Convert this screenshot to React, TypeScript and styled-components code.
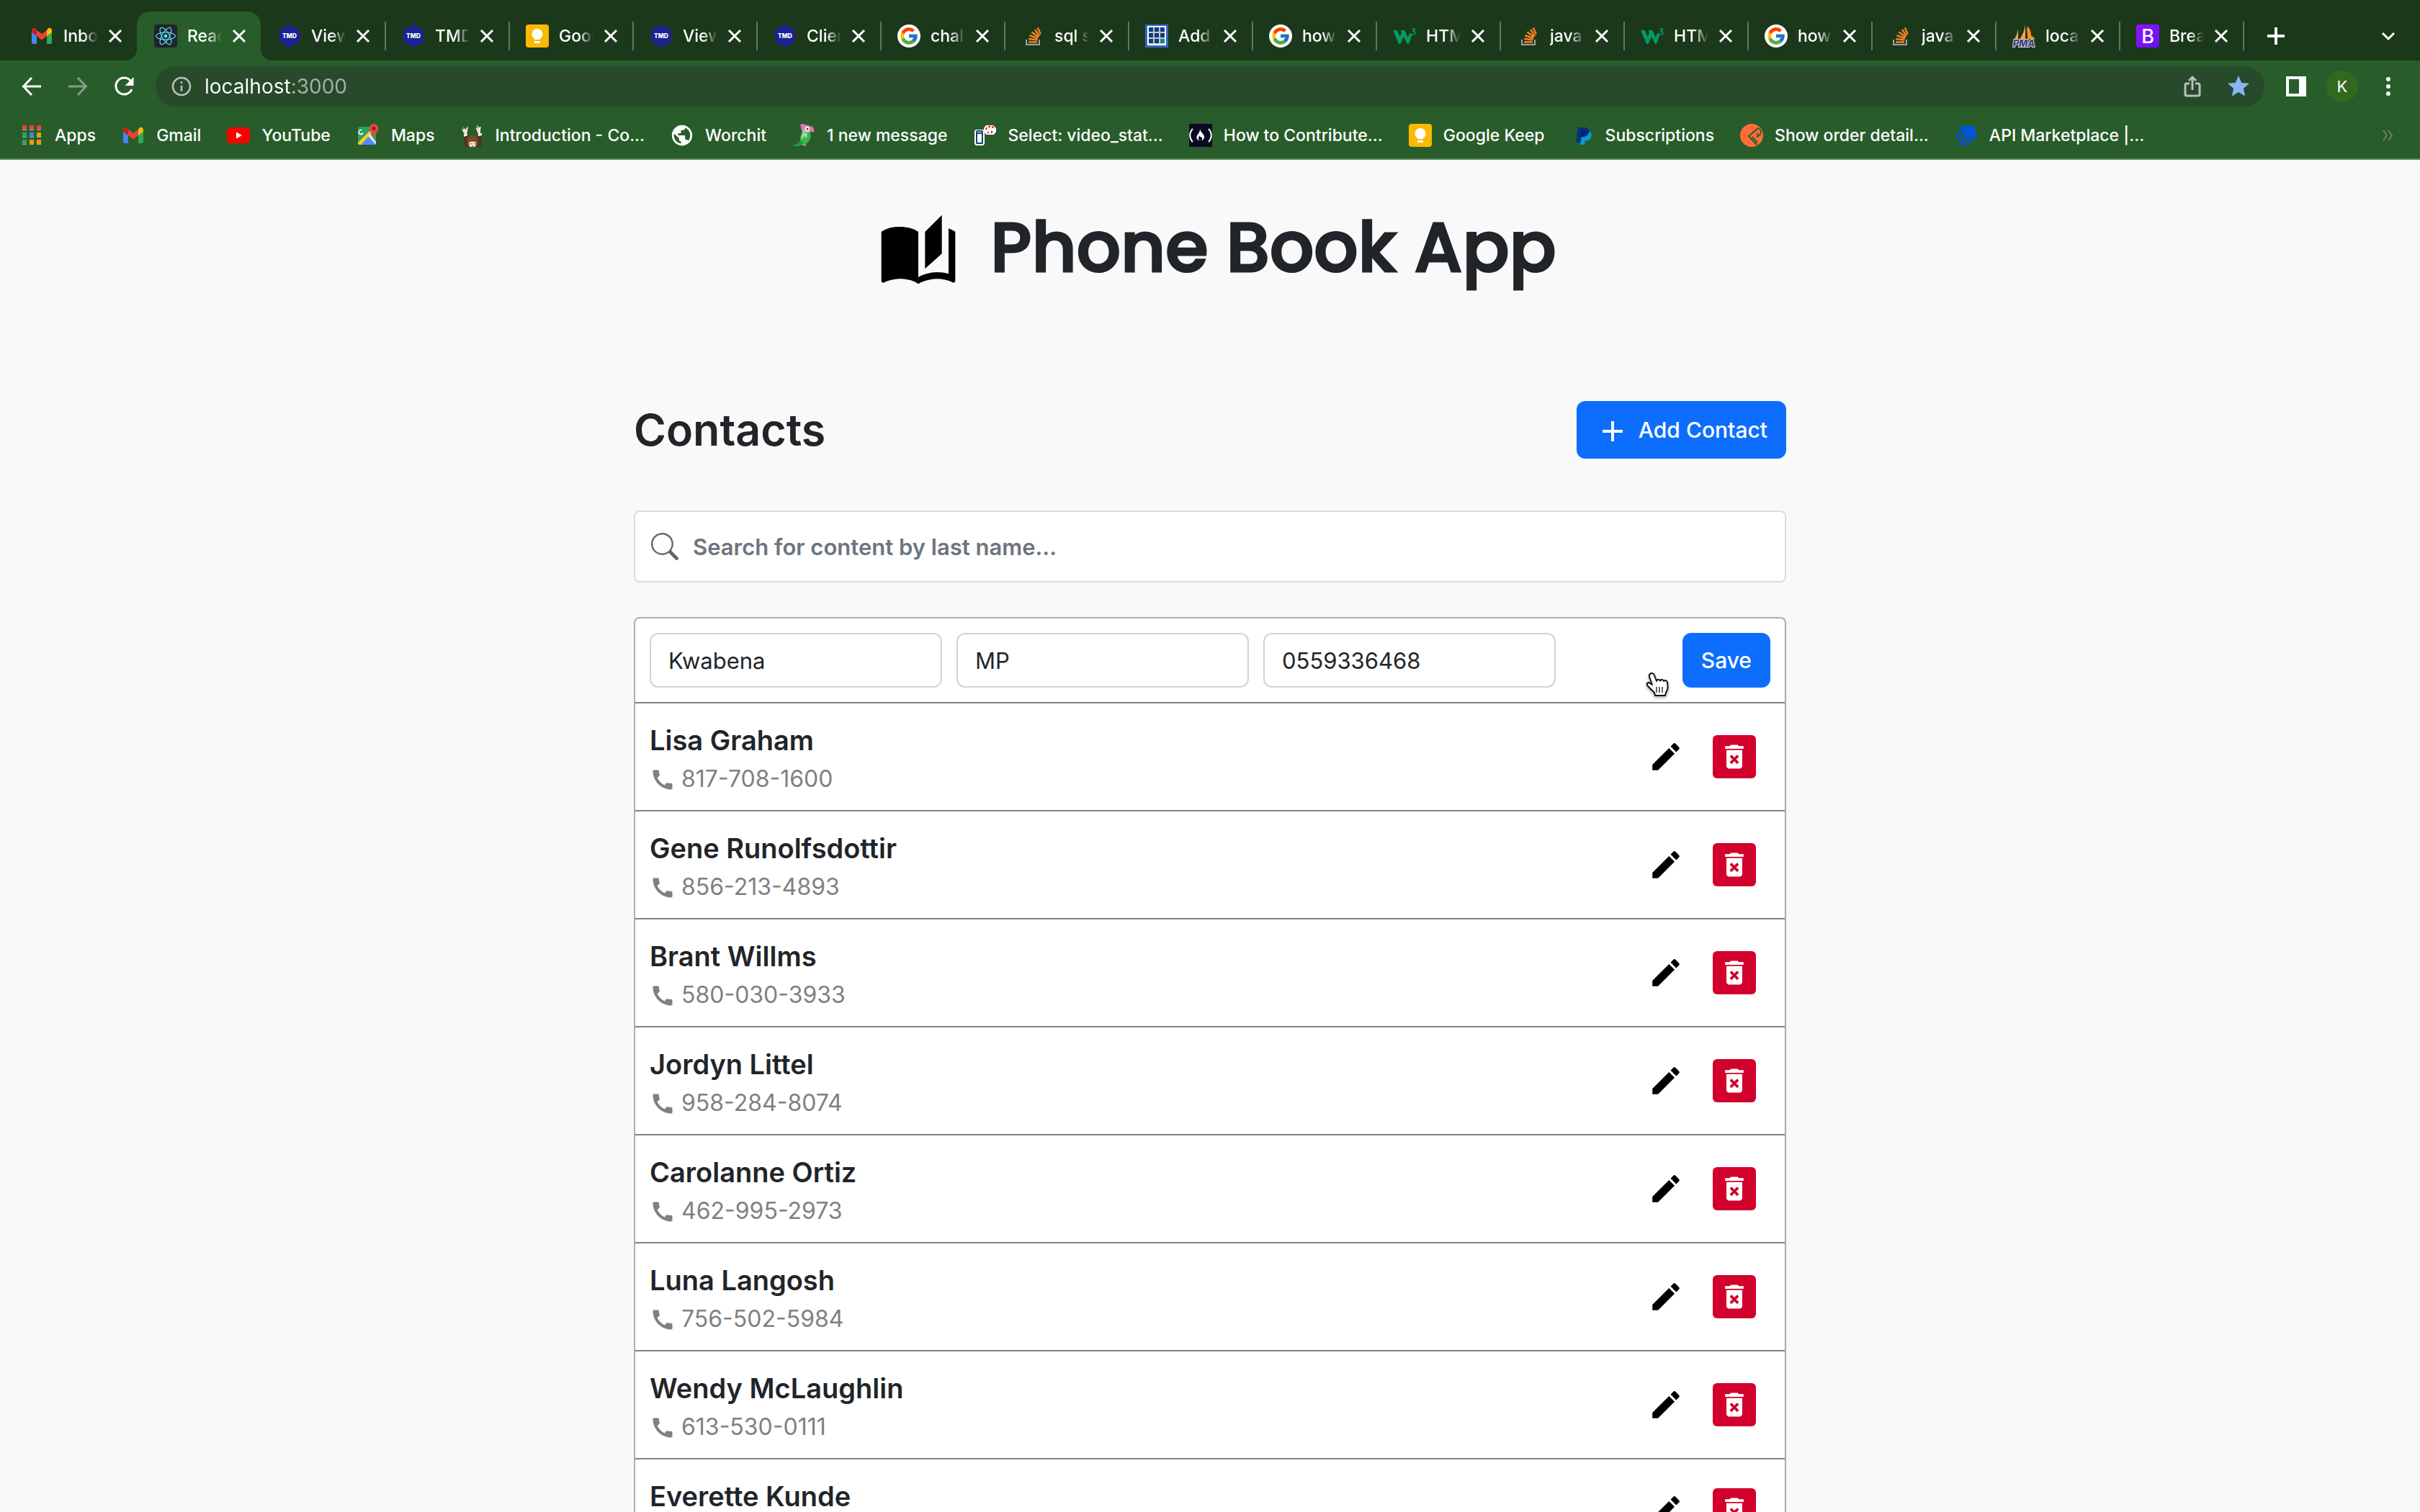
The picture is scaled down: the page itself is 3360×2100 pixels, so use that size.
import React, { useState } from "react";
import styled, { createGlobalStyle } from "styled-components";
import { FcGoogle } from "react-icons/fc";
import { FaReact } from "react-icons/fa";
import { BsSearch } from "react-icons/bs";
import {
  MdAdd,
  MdAutoStories,
  MdCall,
  MdDeleteForever,
  MdEdit,
  MdInfoOutline,
  MdPublic,
  MdStar,
} from "react-icons/md";

const GlobalStyle = createGlobalStyle`
  *, *::before, *::after { box-sizing: border-box; }
  body {
    margin: 0;
    overflow: hidden;
    background: #f9f9f9;
    color: #212529;
    font-family: Inter, "Liberation Sans", sans-serif;
    -webkit-font-smoothing: antialiased;
  }
  button, input { font: inherit; color: inherit; margin: 0; }
  svg { display: block; flex: none; }
`;

const Window = styled.div`
  display: flex;
  flex-direction: column;
  height: 100vh;
  overflow: hidden;
`;

/* ---------- browser chrome ---------- */

const TabStrip = styled.div`
  display: flex;
  align-items: stretch;
  height: 84px;
  padding: 16px 28px 0 18px;
  background: #1b381b;
  color: #fff;
`;

const Tab = styled.div<{ $active: boolean }>`
  position: relative;
  display: flex;
  align-items: center;
  width: 172px;
  flex: none;
  background: ${(p) => (p.$active ? "#285c2b" : "transparent")};
  border-radius: 18px 18px 0 0;

  &::before,
  &::after {
    content: "";
    display: ${(p) => (p.$active ? "block" : "none")};
    position: absolute;
    bottom: 0;
    width: 16px;
    height: 16px;
  }
  &::before {
    left: -16px;
    background: radial-gradient(circle at 0 0, transparent 16px, #285c2b 16px);
  }
  &::after {
    right: -16px;
    background: radial-gradient(circle at 100% 0, transparent 16px, #285c2b 16px);
  }
`;

const Divider = styled.span<{ $visible?: boolean }>`
  width: 2px;
  height: 40px;
  flex: none;
  align-self: center;
  background: ${(p) => (p.$visible ? "#5f785f" : "transparent")};
`;

const TabIcon = styled.span`
  display: grid;
  place-content: center;
  width: 32px;
  height: 32px;
  margin: 0 14px 0 22px;
  flex: none;
`;

const TabTitle = styled.span`
  width: 48px;
  overflow: hidden;
  white-space: nowrap;
  font-size: 23px;
  line-height: 32px;
  font-weight: 500;
  mask-image: linear-gradient(90deg, #000 28px, transparent 48px);
`;

const IconButton = styled.button<{ $size?: number }>`
  display: grid;
  place-content: center;
  width: ${(p) => p.$size ?? 32}px;
  height: ${(p) => p.$size ?? 32}px;
  padding: 0;
  border: 0;
  flex: none;
  background: none;
  color: inherit;
  cursor: pointer;
`;

const TabClose = styled(IconButton)`
  margin-left: 8px;
`;

const NewTab = styled(IconButton)`
  align-self: center;
  margin-left: 28px;
`;

const TabSearch = styled(IconButton)`
  align-self: center;
  margin-left: auto;
`;

const Toolbar = styled.div`
  display: flex;
  align-items: center;
  height: 72px;
  padding: 0 28px;
  background: #285c2b;
  color: #fff;
`;

const NavGroup = styled.div`
  display: flex;
  gap: 32px;
`;

const ActionGroup = styled.div`
  display: flex;
  align-items: center;
  gap: 26px;
`;

const Omnibox = styled.div`
  display: flex;
  flex: 1;
  align-items: center;
  height: 56px;
  margin: 0 28px;
  padding: 0 20px;
  border-radius: 28px;
  background: #264a2a;
  color: #b9bdb9;
`;

const Address = styled.input`
  flex: 1;
  min-width: 0;
  height: 40px;
  margin: 0 16px;
  padding: 0;
  border: 0;
  outline: 0;
  font-size: 28px;
  color: transparent;
  background: linear-gradient(90deg, #fff 120px, #a5b2a6 120px);
  background-clip: text;
  -webkit-background-clip: text;
`;

const OmniboxActions = styled.div`
  display: flex;
  gap: 32px;
`;

const Avatar = styled.button`
  width: 44px;
  height: 44px;
  padding: 0;
  border: 0;
  border-radius: 50%;
  background: #33691e;
  color: #fff;
  font-size: 22px;
  line-height: 44px;
`;

const BookmarkBar = styled.nav`
  display: flex;
  align-items: center;
  gap: 36px;
  height: 66px;
  padding: 0 28px;
  border-bottom: 2px solid #5c845e;
  background: #285c2b;
  color: #fff;
`;

const Bookmark = styled.a`
  display: flex;
  align-items: center;
  gap: 16px;
  flex: none;
  color: inherit;
  font-size: 23px;
  line-height: 32px;
  font-weight: 500;
  text-decoration: none;
  white-space: nowrap;
`;

const BookmarkIcon = styled.span`
  display: grid;
  place-content: center;
  width: 32px;
  height: 32px;
`;

const BookmarkOverflow = styled(IconButton)`
  margin-left: auto;
  color: #71806f;
`;

/* ---------- page ---------- */

const Page = styled.main`
  flex: 1;
  min-height: 0;
  overflow: hidden;
  padding: 60px 24px 0;
`;

const Brand = styled.header`
  display: flex;
  justify-content: center;
  align-items: flex-end;
  gap: 44px;
  padding-left: 20px;
  color: #000;
`;

const BrandTitle = styled.h1`
  margin: 0;
  color: #212529;
  font-family: Poppins, Inter, sans-serif;
  font-size: 96px;
  line-height: 124px;
  font-weight: 500;
  -webkit-text-stroke: 3px #212529;
`;

const Container = styled.section`
  max-width: 1600px;
  margin: 151px auto 0;
`;

const SectionHead = styled.div`
  display: flex;
  justify-content: space-between;
  align-items: center;
`;

const SectionTitle = styled.h2`
  margin: 0;
  font-size: 61px;
  line-height: 72px;
  font-weight: 600;
`;

const PrimaryButton = styled.button<{ $height: number }>`
  display: flex;
  justify-content: center;
  align-items: center;
  height: ${(p) => p.$height}px;
  padding: 0 26px;
  border: 0;
  border-radius: 12px;
  background: #0d6efd;
  color: #fff;
  font-size: 30px;
  font-weight: 500;
  cursor: pointer;
`;

const ButtonContent = styled.span`
  display: flex;
  align-items: flex-end;
  gap: 12px;
  line-height: 52px;
`;

const SearchField = styled.label`
  display: flex;
  align-items: center;
  gap: 20px;
  height: 100px;
  margin-top: 72px;
  padding: 0 22px;
  border: 2px solid #dcdcdc;
  border-radius: 8px;
  background: #fff;
  color: #666;
`;

const SearchInput = styled.input`
  flex: 1;
  height: 60px;
  padding: 0;
  border: 0;
  outline: 0;
  background: none;
  font-size: 31px;
  font-weight: 600;
  &::placeholder { color: #6c757d; opacity: 1; }
`;

const List = styled.div`
  margin-top: 48px;
  border: 2px solid #adadad;
  border-radius: 8px;
  background: #fff;
`;

const EditRow = styled.form`
  position: relative;
  display: flex;
  gap: 20px;
  padding: 20px;
  border-bottom: 2px solid #808080;
`;

const Field = styled.input`
  width: 406px;
  height: 76px;
  min-width: 0;
  padding: 0 24px;
  border: 2px solid #ced4da;
  border-radius: 12px;
  outline: 0;
  background: #fff;
  font-size: 31px;
`;

const FormEnd = styled.div`
  margin-left: auto;
`;

const Pointer = styled.svg`
  position: absolute;
  top: 74px;
  right: 159px;
  filter: drop-shadow(0 2px 2px rgba(0, 0, 0, 0.35));
`;

const Contacts = styled.ul`
  margin: 0;
  padding: 0;
  list-style: none;
`;

const Row = styled.li`
  display: flex;
  align-items: center;
  justify-content: space-between;
  padding: 20px 40px 20px 20px;
  border-bottom: 2px solid #808080;
`;

const Name = styled.h3`
  margin: 0;
  font-size: 38px;
  line-height: 62px;
  font-weight: 600;
`;

const Phone = styled.p`
  display: flex;
  align-items: center;
  gap: 8px;
  margin: 0;
  color: #808080;
  font-size: 32px;
  line-height: 46px;
  svg { margin-top: 2px; }
`;

const RowActions = styled.div`
  display: flex;
  align-items: center;
  gap: 40px;
  color: #000;
`;

const DeleteButton = styled(IconButton)`
  border-radius: 6px;
  background: #d1002c;
  color: #fff;
`;

/* ---------- favicons ---------- */

const Gmail = () => (
  <svg width="30" height="30" viewBox="0 0 30 30">
    <path d="M1 7v17a2 2 0 0 0 2 2h5V13z" fill="#4285f4" />
    <path d="M22 26h5a2 2 0 0 0 2-2V7l-7 6z" fill="#34a853" />
    <path d="M22 7v8l7-5V7.500C29 4 25.500 3 23.500 4.500z" fill="#fbbc04" />
    <path d="M8 15V7l7 5 7-5v8l-7 5.500z" fill="#ea4335" />
    <path d="M1 7.500V10l7 5V7L6.500 4.500C4.500 3 1 4 1 7.500z" fill="#c5221f" />
  </svg>
);

const ReactLogo = () => (
  <svg width="32" height="32" viewBox="0 0 32 32">
    <rect width="32" height="32" rx="4" fill="#20232a" />
    <FaReact x="2" y="2" size={28} color="#61dafb" />
  </svg>
);

const Tmd = () => (
  <svg width="32" height="32" viewBox="0 0 32 32">
    <path d="M16 0l14 8v16l-14 8-14-8V8z" fill="#1a2390" />
    <text x="16" y="19" fill="#fff" fontSize="8.500" fontWeight="800" textAnchor="middle">TMD</text>
  </svg>
);

const Keep = () => (
  <svg width="32" height="32" viewBox="0 0 32 32">
    <rect width="32" height="32" rx="4" fill="#fbb904" />
    <path d="M16 6a7.500 7.500 0 0 0-4 13.800V21h8v-1.200A7.500 7.500 0 0 0 16 6zM12 23h8v3h-8z" fill="#fff" />
  </svg>
);

const Google = () => (
  <svg width="32" height="32" viewBox="0 0 32 32">
    <circle cx="16" cy="16" r="16" fill="#fff" />
    <FcGoogle x="2" y="2" size={28} />
  </svg>
);

const StackOverflow = () => (
  <svg width="32" height="32" viewBox="0 0 32 32" fill="none">
    <path d="M7 21v7h18v-7" stroke="#9da3a6" strokeWidth="2" />
    <g stroke="#f48024" strokeWidth="2.500">
      <path d="M10 24.500h12M10.200 20l12 1.600M11.500 15.200l11.500 4M14.500 10.500l9.500 7M19 7l6 9M22.800 4.500l4 9" />
    </g>
  </svg>
);

const Calculator = () => (
  <svg width="32" height="32" viewBox="0 0 32 32">
    <path d="M0 0h32v32H0z" fill="#3767c0" />
    <path d="M3 2h26v27H3z" fill="#fff" />
    <path d="M5 4h22v23H5z" fill="#c5c5cb" />
    <path d="M5 4h6v6H5zM13 4h6v6h-6zM21 4h6v6h-6zM5 12h6v6H5zM13 12h6v6h-6zM21 12h6v6h-6zM5 20h6v6H5zM13 20h6v6h-6z" fill="#0c3f80" />
    <path d="M21 20h6v6h-6z" fill="#0a8c94" />
  </svg>
);

const W3 = () => (
  <svg width="32" height="32" viewBox="0 0 32 32">
    <path d="M0 8h6l3.500 9L12 12l-1.500-4h6l4 10 3-6 3.500 1L22 27h-2l-5-10-4.500 10H8z" fill="#059862" />
    <path d="M26.500 6.500h4l-2.500 3c2 0 3 1 3 2.300 0 2-3 2.700-4.800 1.200" fill="none" stroke="#059862" strokeWidth="1.500" />
  </svg>
);

const PhpMyAdmin = () => (
  <svg width="32" height="32" viewBox="0 0 32 32">
    <path d="M8 6v16H2c3-5 5-10 6-16zM18 0v21H10c4-6 7-13 8-21zM20 4l6 13-5-1z" fill="#f9a34b" />
    <path d="M21 2c3 3 5 8 5 13l6 5H21z" fill="#f78f1e" />
    <text x="16" y="31" fill="#3f3f78" stroke="#d9d9e6" strokeWidth="2" paintOrder="stroke" fontSize="13" fontStyle="italic" fontWeight="800" textAnchor="middle">PMA</text>
  </svg>
);

const Bootstrap = () => (
  <svg width="32" height="32" viewBox="0 0 32 32">
    <defs>
      <linearGradient id="bs" x1="0" y1="0" x2="1" y2="1">
        <stop offset="0" stopColor="#9013fe" />
        <stop offset="1" stopColor="#6610f2" />
      </linearGradient>
    </defs>
    <rect width="32" height="32" rx="4" fill="url(#bs)" />
    <text x="16" y="26" fill="#fff" fontSize="27" fontWeight="500" textAnchor="middle">B</text>
  </svg>
);

const AppsGrid = () => {
  const colors = ["#ea4335", "#ea4335", "#ea4335", "#34a05a", "#2a8bf2", "#f29900", "#34a05a", "#f29900", "#f29900"];
  return (
    <svg width="32" height="32" viewBox="0 0 32 32">
      {colors.map((c, i) => {
        const x = 3 + (i % 3) * 10;
        const y = 2 + Math.floor(i / 3) * 10;
        return (
          <g key={i}>
            <rect x={x} y={y + 1} width="6" height="6" fill="#9db59e" />
            <rect x={x} y={y} width="6" height="6" fill={c} />
          </g>
        );
      })}
    </svg>
  );
};

const YouTube = () => (
  <svg width="32" height="32" viewBox="0 0 32 32">
    <rect y="5" width="32" height="22" rx="5" fill="#f00" />
    <path d="M13 11.500v9l8-4.500z" fill="#fff" />
  </svg>
);

const Maps = () => (
  <svg width="32" height="32" viewBox="0 0 32 32">
    <rect x="2" y="4" width="25" height="25" rx="3" fill="#2aa260" />
    <path d="M4 29L16 17l11 12z" fill="#4f8df5" />
    <path d="M2 26L20 8l3 3L6 29H4a2 2 0 0 1-2-2z" fill="#fccb25" />
    <path d="M16 17l3-3 8 11v4z" fill="#e6e6e6" />
    <path d="M7.500 9a3 3 0 1 0 1 4.500H6" stroke="#fff" strokeWidth="1.400" fill="none" />
    <path d="M24 0a6.500 6.500 0 0 1 6.500 6.500C30.500 12 25 13 24 20c-1-7-6.500-8-6.500-13.500A6.500 6.500 0 0 1 24 0z" fill="#e04a3f" />
    <circle cx="24" cy="6.500" r="2.400" fill="#7b1f1a" />
  </svg>
);

const Person = () => (
  <svg width="32" height="32" viewBox="0 0 32 32">
    <path d="M4 17l4-1 3 9h9l5-9 4 1v12l-2 3H6l-2-4z" fill="#4e3524" />
    <path d="M10 31c-3-5-2-15 6-15s9 10 6 15z" fill="#83462a" />
    <path d="M11 26c2-2 8-2 10 0l-1 6h-8z" fill="#f0dfc4" />
    <path d="M5 15L1 7l3 1-1-4 3 4 4-5-1 7-1 5zM24 14l-4-9 3 2-1-6 3 4 3-1-1 4v6z" fill="#f3e3cc" />
    <path d="M4 15l5-1v2l-5 2zM24 14l5-1v3l-5 1z" fill="#fff" />
    <path d="M13 27l2 1m3 0l2-1m-5 4h3" stroke="#6d5140" fill="none" />
  </svg>
);

const Parrot = () => (
  <svg width="32" height="32" viewBox="0 0 32 32">
    <path d="M15 10h9c3 6 2 13-4 17-4 3-9 2-9-3 0-6 1-10 4-14z" fill="#3cb54a" />
    <path d="M1 29c5 0 8-2 10-6l5 4c-3 4-9 5-14 4z" fill="#12a04a" />
    <path d="M14 12l7 1-1 7-3-3-3 4-2-1z" fill="#9cd79f" />
    <path d="M13 4c3-3 9-3 12 0v8H14z" fill="#b9b5b8" />
    <path d="M11 1c3-1 6-1 8 1l-3 5-3 2zM24 3c5 0 7 4 6 9-2-1-5-2-7-2z" fill="#ee6fae" />
    <circle cx="21" cy="7" r="3" fill="#fff" />
    <circle cx="21" cy="7" r="1.500" fill="#5d3017" />
    <path d="M13 29l4-2 3 3-2 1z" fill="#ee6fae" />
  </svg>
);

const SqlSelect = () => (
  <svg width="32" height="32" viewBox="0 0 32 32">
    <path d="M4 8h10l2 2v18l-2 2H4l-2-2V10z" fill="#fff" />
    <path fillRule="evenodd" d="M5 9h8l1 2v16l-1 1H5l-1-1V11zM6 11v1h6v-1zM6 14v12h6V14z" fill="#0d4a66" />
    <path d="M18 2h10l4 4v5l-3 4H18l-3-5V6z" fill="#fff" />
    <path d="M18 8c0-5 10-6 12-1M20 12h2M26 10v4" fill="none" stroke="#f00" strokeWidth="2" strokeDasharray="3 2" />
  </svg>
);

const FreeCodeCamp = () => (
  <svg width="32" height="32" viewBox="0 0 32 32" fill="none">
    <path d="M0 0h32v32H0z" fill="#0a0a23" />
    <path d="M5 7C0 12 0 20 5 25M27 7c5 5 5 13 0 18" stroke="#fff" strokeWidth="2" />
    <path d="M15 7c1 5 7 8 6 12-.500 2-2 4-4 4 2-2 1-4 0-5-1 1-3 0-2-2-2 2-3 5-.500 7-3 0-4.500-3-4-5 1-4 5-6 4.500-11z" fill="#fff" />
  </svg>
);

const PayPal = () => (
  <svg width="32" height="32" viewBox="0 0 32 32">
    <path d="M17 11h9c4 1 4 12-4 12h-2l-1 6h-6z" fill="#009cde" />
    <path d="M10 5h10c7 0 8 12-3 13h-3l-1 8H7z" fill="#003087" />
    <path d="M15 10h9c0 5-3 8-7 8h-3z" fill="#012169" />
  </svg>
);

const Postman = () => (
  <svg width="32" height="32" viewBox="0 0 32 32" fill="none">
    <circle cx="16" cy="16" r="16" fill="#ff6c37" />
    <path d="M25 6L12 17l11 12M17 18l7 8" stroke="#285c2b" strokeWidth="2" />
    <path d="M25 6c4 1 5 5 3 9l-4 3c-1-2 0-4 2-5" stroke="#285c2b" strokeWidth="1.600" />
  </svg>
);

const RapidApi = () => (
  <svg width="32" height="32" viewBox="0 0 32 32" fill="#0055da">
    <path d="M10 3h15c1.500 0 2 .500 2.500 2L31 17c0 1-1 2-2 2H15c-1 0-2-1-2.500-2L8 5c0-1 1-2 2-2z" />
    <path d="M5.500 7l5 12c.500 1.500 1 2 2 2H29l-1.500 2.500H12c-2 0-3-1-3.500-2L4.500 11z" />
    <path d="M2.500 12.500l5 11c.500 1 1 1.500 2 1.500h15.500l-2 2H8.500c-1.500 0-2.500-1-3-2.500L1.500 16z" />
    <path d="M5.500 27l1.500 2h15l-1.500 1.500H7.500c-1.500 0-2-1.500-2-3.500z" />
  </svg>
);

const FAVICONS = {
  gmail: Gmail,
  react: ReactLogo,
  tmd: Tmd,
  keep: Keep,
  google: Google,
  stack: StackOverflow,
  calc: Calculator,
  w3: W3,
  pma: PhpMyAdmin,
  bootstrap: Bootstrap,
  apps: AppsGrid,
  youtube: YouTube,
  maps: Maps,
  person: Person,
  globe: () => <MdPublic size={34} />,
  parrot: Parrot,
  sql: SqlSelect,
  fcc: FreeCodeCamp,
  paypal: PayPal,
  postman: Postman,
  rapid: RapidApi,
};

type IconName = keyof typeof FAVICONS;

const Favicon = ({ name }: { name: IconName }) => {
  const Icon = FAVICONS[name];
  return <Icon />;
};

/* ---------- data ---------- */

const TABS: [IconName, string][] = [
  ["gmail", "Inbox"],
  ["react", "React"],
  ["tmd", "View"],
  ["tmd", "TMD"],
  ["keep", "Goog"],
  ["tmd", "View"],
  ["tmd", "Clien"],
  ["google", "chall"],
  ["stack", "sql s"],
  ["calc", "Add"],
  ["google", "how"],
  ["w3", "HTML"],
  ["stack", "java"],
  ["w3", "HTML"],
  ["google", "how"],
  ["stack", "java"],
  ["pma", "local"],
  ["bootstrap", "Brea"],
];
const ACTIVE_TAB = 1;

const BOOKMARKS: [IconName, string][] = [
  ["apps", "Apps"],
  ["gmail", "Gmail"],
  ["youtube", "YouTube"],
  ["maps", "Maps"],
  ["person", "Introduction - Co..."],
  ["globe", "Worchit"],
  ["parrot", "1 new message"],
  ["sql", "Select: video_stat..."],
  ["fcc", "How to Contribute..."],
  ["keep", "Google Keep"],
  ["paypal", "Subscriptions"],
  ["postman", "Show order detail..."],
  ["rapid", "API Marketplace |..."],
];

const CONTACTS = [
  { name: "Lisa Graham", phone: "817-708-1600" },
  { name: "Gene Runolfsdottir", phone: "856-213-4893" },
  { name: "Brant Willms", phone: "580-030-3933" },
  { name: "Jordyn Littel", phone: "958-284-8074" },
  { name: "Carolanne Ortiz", phone: "462-995-2973" },
  { name: "Luna Langosh", phone: "756-502-5984" },
  { name: "Wendy McLaughlin", phone: "613-530-0111" },
  { name: "Everette Kunde", phone: "" },
];

/* ---------- sections ---------- */

const Stroke = ({ d, width = 3, size = 32 }: { d: string; width?: number; size?: number }) => (
  <svg width={size} height={size} viewBox="0 0 32 32" fill="none" stroke="currentColor" strokeWidth={width}>
    <path d={d} />
  </svg>
);

const Tabs = () => (
  <TabStrip>
    {TABS.map(([icon, title], i) => (
      <Tab key={i} $active={i === ACTIVE_TAB}>
        <Divider $visible={i > ACTIVE_TAB + 1} />
        <TabIcon>
          <Favicon name={icon} />
        </TabIcon>
        <TabTitle>{title}</TabTitle>
        <TabClose aria-label="Close tab">
          <Stroke d="M8 8l16 16M24 8L8 24" />
        </TabClose>
      </Tab>
    ))}
    <Divider $visible />
    <NewTab aria-label="New tab">
      <Stroke d="M16 4v24M4 16h24" width={4} />
    </NewTab>
    <TabSearch aria-label="Search tabs">
      <Stroke d="M8 12l8 8 8-8" />
    </TabSearch>
  </TabStrip>
);

const AddressBar = () => {
  const [url, setUrl] = useState("localhost:3000");
  return (
    <Toolbar>
      <NavGroup>
        <IconButton aria-label="Back">
          <Stroke d="M29 16H5M16 4L4.500 16 16 28" />
        </IconButton>
        <IconButton aria-label="Forward">
          <svg width="32" height="32" viewBox="0 0 32 32" fill="none" stroke="#82a083" strokeWidth="3">
            <path d="M3 16h24M16 4l11.500 12L16 28" />
          </svg>
        </IconButton>
        <IconButton aria-label="Reload">
          <svg width="32" height="32" viewBox="0 0 32 32">
            <path d="M25.500 8.500A11.500 11.500 0 1 0 27 20" fill="none" stroke="#fff" strokeWidth="3" />
            <path d="M29.500 3v12h-12z" fill="#fff" />
          </svg>
        </IconButton>
      </NavGroup>
      <Omnibox>
        <MdInfoOutline size={32} />
        <Address aria-label="Address" value={url} onChange={(e) => setUrl(e.target.value)} />
        <OmniboxActions>
          <IconButton aria-label="Share">
            <Stroke d="M12 12H8q-2 0-2 2v13q0 2 2 2h16q2 0 2-2V14q0-2-2-2h-4M16 21V4M11 8l5-5 5 5" />
          </IconButton>
          <IconButton aria-label="Bookmark this page">
            <MdStar size={36} color="#8ab4f8" />
          </IconButton>
        </OmniboxActions>
      </Omnibox>
      <ActionGroup>
        <IconButton aria-label="Side panel">
          <svg width="32" height="32" viewBox="0 0 32 32">
            <path fillRule="evenodd" d="M2 2h28v28H2zM6 6v20h14V6z" fill="#fff" />
          </svg>
        </IconButton>
        <Avatar aria-label="Profile">K</Avatar>
        <IconButton aria-label="Menu">
          <svg width="32" height="32" viewBox="0 0 32 32" fill="#fff">
            <circle cx="16" cy="6" r="3" />
            <circle cx="16" cy="16" r="3" />
            <circle cx="16" cy="26" r="3" />
          </svg>
        </IconButton>
      </ActionGroup>
    </Toolbar>
  );
};

const Bookmarks = () => (
  <BookmarkBar aria-label="Bookmarks">
    {BOOKMARKS.map(([icon, label]) => (
      <Bookmark key={label} href="#">
        <BookmarkIcon>
          <Favicon name={icon} />
        </BookmarkIcon>
        {label}
      </Bookmark>
    ))}
    <BookmarkOverflow aria-label="More bookmarks">
      <Stroke d="M9 9l5 7-5 7M16 9l5 7-5 7" width={2} />
    </BookmarkOverflow>
  </BookmarkBar>
);

const EditForm = () => (
  <EditRow onSubmit={(e) => e.preventDefault()}>
    <Field aria-label="First name" defaultValue="Kwabena" />
    <Field aria-label="Last name" defaultValue="MP" />
    <Field aria-label="Phone number" defaultValue="0559336468" />
    <FormEnd>
      <PrimaryButton type="submit" $height={76}>
        Save
      </PrimaryButton>
    </FormEnd>
    <Pointer width="36" height="38" viewBox="0 0 36 38" aria-hidden="true">
      <path
        d="M8 3c2-2 5-1 6 2l3 8c0-2 4-3 5-.500 1-2 4-2 5 .500 2-2 5-.500 5 2 1 7 1 9-2 14l-1 4H15l-1-4c-3-3-6-6-9-9-3-4 0-6 3-4l3 2-4-11c-.500-1.500 0-3 1-4z"
        fill="#fff"
        stroke="#111"
        strokeWidth="2"
        strokeLinejoin="round"
      />
      <path d="M17 21v8M21 21v8M25 21v8" stroke="#333" strokeWidth="1.500" />
    </Pointer>
  </EditRow>
);

const ContactRow = ({ name, phone }: { name: string; phone: string }) => (
  <Row>
    <div>
      <Name>{name}</Name>
      <Phone>
        <MdCall size={36} />
        {phone}
      </Phone>
    </div>
    <RowActions>
      <IconButton $size={50} aria-label={`Edit ${name}`}>
        <MdEdit size={50} />
      </IconButton>
      <DeleteButton $size={60} aria-label={`Delete ${name}`}>
        <MdDeleteForever size={44} />
      </DeleteButton>
    </RowActions>
  </Row>
);

export default function App() {
  return (
    <Window>
      <GlobalStyle />
      <Tabs />
      <AddressBar />
      <Bookmarks />
      <Page>
        <Brand>
          <MdAutoStories size={112} />
          <BrandTitle>Phone Book App</BrandTitle>
        </Brand>
        <Container>
          <SectionHead>
            <SectionTitle>Contacts</SectionTitle>
            <PrimaryButton type="button" $height={80}>
              <ButtonContent>
                <MdAdd size={48} />
                Add Contact
              </ButtonContent>
            </PrimaryButton>
          </SectionHead>
          <SearchField>
            <BsSearch size={38} />
            <SearchInput aria-label="Search contacts" placeholder="Search for content by last name..." />
          </SearchField>
          <List>
            <EditForm />
            <Contacts>
              {CONTACTS.map((c) => (
                <ContactRow key={c.name} {...c} />
              ))}
            </Contacts>
          </List>
        </Container>
      </Page>
    </Window>
  );
}
